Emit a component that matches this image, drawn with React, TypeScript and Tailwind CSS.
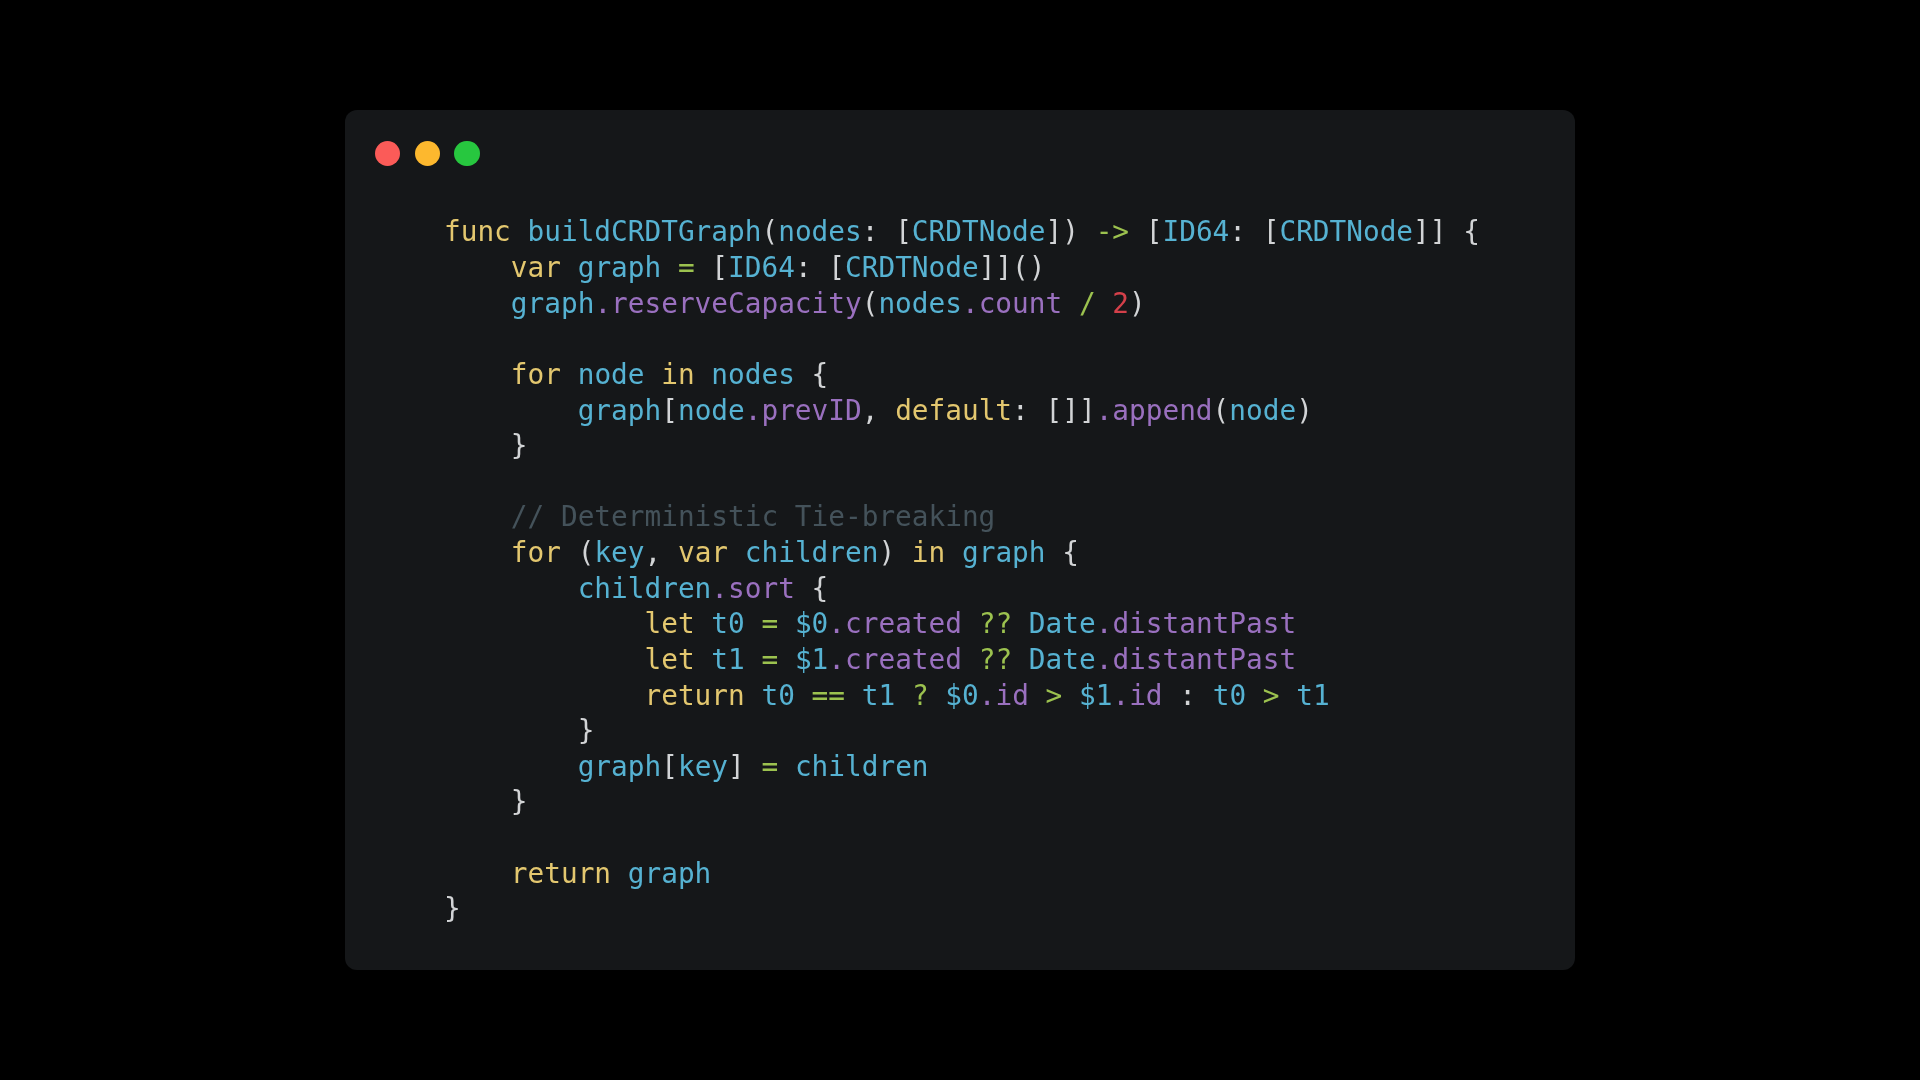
const Y = "text-[#e3c76f]";
const B = "text-[#56b2d2]";
const P = "text-[#9a70bf]";
const G = "text-[#9cc24f]";
const W = "text-[#d2d4d6]";
const R = "text-[#d4404a]";
const C = "text-[#44525a]";

type Tok = [string, string];

const lines: { indent: number; toks: Tok[] }[] = [
  { indent: 0, toks: [[Y, "func"], [W, " "], [B, "buildCRDTGraph"], [W, "("], [B, "nodes"], [W, ": ["], [B, "CRDTNode"], [W, "]) "], [G, "->"], [W, " ["], [B, "ID64"], [W, ": ["], [B, "CRDTNode"], [W, "]] {"]] },
  { indent: 4, toks: [[Y, "var"], [W, " "], [B, "graph"], [W, " "], [G, "="], [W, " ["], [B, "ID64"], [W, ": ["], [B, "CRDTNode"], [W, "]]()"]] },
  { indent: 4, toks: [[B, "graph"], [P, ".reserveCapacity"], [W, "("], [B, "nodes"], [P, ".count"], [W, " "], [G, "/"], [W, " "], [R, "2"], [W, ")"]] },
  { indent: 0, toks: [] },
  { indent: 4, toks: [[Y, "for"], [W, " "], [B, "node"], [W, " "], [Y, "in"], [W, " "], [B, "nodes"], [W, " {"]] },
  { indent: 8, toks: [[B, "graph"], [W, "["], [B, "node"], [P, ".prevID"], [W, ", "], [Y, "default"], [W, ": []]"], [P, ".append"], [W, "("], [B, "node"], [W, ")"]] },
  { indent: 4, toks: [[W, "}"]] },
  { indent: 0, toks: [] },
  { indent: 4, toks: [[C, "// Deterministic Tie-breaking"]] },
  { indent: 4, toks: [[Y, "for"], [W, " ("], [B, "key"], [W, ", "], [Y, "var"], [W, " "], [B, "children"], [W, ") "], [Y, "in"], [W, " "], [B, "graph"], [W, " {"]] },
  { indent: 8, toks: [[B, "children"], [P, ".sort"], [W, " {"]] },
  { indent: 12, toks: [[Y, "let"], [W, " "], [B, "t0"], [W, " "], [G, "="], [W, " "], [B, "$0"], [P, ".created"], [W, " "], [G, "??"], [W, " "], [B, "Date"], [P, ".distantPast"]] },
  { indent: 12, toks: [[Y, "let"], [W, " "], [B, "t1"], [W, " "], [G, "="], [W, " "], [B, "$1"], [P, ".created"], [W, " "], [G, "??"], [W, " "], [B, "Date"], [P, ".distantPast"]] },
  { indent: 12, toks: [[Y, "return"], [W, " "], [B, "t0"], [W, " "], [G, "=="], [W, " "], [B, "t1"], [W, " "], [G, "?"], [W, " "], [B, "$0"], [P, ".id"], [W, " "], [G, ">"], [W, " "], [B, "$1"], [P, ".id"], [W, " : "], [B, "t0"], [W, " "], [G, ">"], [W, " "], [B, "t1"]] },
  { indent: 8, toks: [[W, "}"]] },
  { indent: 8, toks: [[B, "graph"], [W, "["], [B, "key"], [W, "] "], [G, "="], [W, " "], [B, "children"]] },
  { indent: 4, toks: [[W, "}"]] },
  { indent: 0, toks: [] },
  { indent: 4, toks: [[Y, "return"], [W, " "], [B, "graph"]] },
  { indent: 0, toks: [[W, "}"]] },
];

export default function App() {
  return (
    <div className="flex h-[1080px] w-[1920px] items-center justify-center overflow-hidden bg-black">
      <div className="h-[860px] w-[1230px] rounded-[12px] bg-[#151719] pl-[30px] pt-[31px]">
        <div className="flex gap-[14.4px]">
          <div className="h-[25.3px] w-[25.3px] rounded-full bg-[#fb5b58]" />
          <div className="h-[25.3px] w-[25.3px] rounded-full bg-[#fdb82e]" />
          <div className="h-[25.3px] w-[25.3px] rounded-full bg-[#27c73f]" />
        </div>
        <pre className="mt-[48.1px] pl-[69px] font-['DejaVu_Sans_Mono',monospace] text-[27.76px] leading-[35.64px] [filter:blur(0.45px)]">
          {lines.map((l, i) => (
            <div key={i} className="h-[35.64px]">
              {" ".repeat(l.indent)}
              {l.toks.map((t, j) => (
                <span key={j} className={t[0]}>
                  {t[1]}
                </span>
              ))}
            </div>
          ))}
        </pre>
      </div>
    </div>
  );
}
